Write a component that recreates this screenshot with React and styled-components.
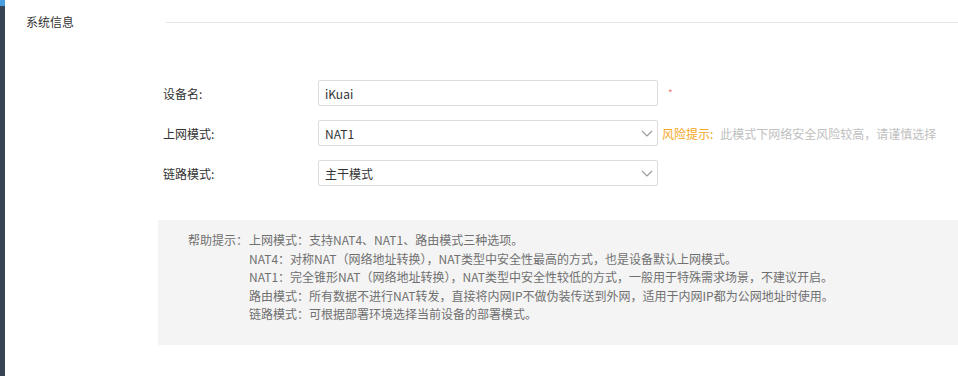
import React from "react";
import styled, { createGlobalStyle } from "styled-components";

const Global = createGlobalStyle`
  html, body { margin: 0; padding: 0; background: #fff; }
  body { font-family: "Noto Sans CJK SC", "Noto Sans", sans-serif; font-size: 12px; color: #333; }
  * { box-sizing: border-box; }
`;

const Page = styled.div`
  display: flex;
  width: 958px;
  height: 376px;
  overflow: hidden;
`;

const Sidebar = styled.div`
  width: 5px;
  flex: none;
  background: #364456;
  border-top: 6px solid #4a9fe0;
`;

const Content = styled.div`
  flex: 1;
  display: flex;
  flex-direction: column;
`;

const Header = styled.div`
  height: 44px;
  display: flex;
  align-items: center;
`;

const Title = styled.div`
  width: 161px;
  padding-left: 21px;
  font-size: 12px;
  color: #333;
  line-height: 1;
  padding-bottom: 1px;
`;

const Rule = styled.div`
  flex: 1;
  height: 1px;
  background: #e6e6e6;
`;

const Form = styled.div`
  margin-top: 36px;
  padding-left: 158px;
  display: flex;
  flex-direction: column;
  gap: 14px;
`;

const Row = styled.div`
  display: flex;
  align-items: center;
  height: 26px;
`;

const Label = styled.div`
  width: 155px;
  color: #333;
  font-size: 12px;
`;

const Field = styled.div`
  position: relative;
  width: 340px;
  height: 26px;
  border: 1px solid #dcdcdc;
  border-radius: 2px;
  display: flex;
  align-items: center;
  padding-left: 6px;
  font-size: 12px;
  color: #333;
  background: #fff;
`;

const Chevron = styled.svg`
  position: absolute;
  right: 4px;
  top: 9px;
`;

const Required = styled.span`
  margin-left: 10px;
  color: #f47c7c;
  font-size: 10px;
  margin-top: -2px;
`;

const Risk = styled.span`
  margin-left: 4px;
  color: #f5a623;
  font-size: 12px;
`;

const RiskText = styled.span`
  margin-left: 7px;
  color: #c0c0c0;
  font-size: 12px;
`;

const Help = styled.div`
  margin-top: 34px;
  margin-left: 153px;
  height: 125px;
  background: #f4f4f4;
  padding: 11px 0 0 30px;
  display: grid;
  grid-template-columns: 61px auto;
  align-content: start;
  color: #707070;
  font-size: 12px;
  line-height: 18.5px;
`;

const HelpLabel = styled.div``;

const HelpLines = styled.div`
  display: flex;
  flex-direction: column;
`;

const Arrow = () => (
  <Chevron width="12" height="7" viewBox="0 0 12 7">
    <path d="M1 1 L6 6 L11 1" fill="none" stroke="#999" strokeWidth="1.1" />
  </Chevron>
);

export default function App() {
  return (
    <>
      <Global />
      <Page>
        <Sidebar />
        <Content>
          <Header>
            <Title>系统信息</Title>
            <Rule />
          </Header>
          <Form>
            <Row>
              <Label>设备名:</Label>
              <Field>iKuai</Field>
              <Required>*</Required>
            </Row>
            <Row>
              <Label>上网模式:</Label>
              <Field>
                NAT1
                <Arrow />
              </Field>
              <Risk>风险提示:</Risk>
              <RiskText>此模式下网络安全风险较高，请谨慎选择</RiskText>
            </Row>
            <Row>
              <Label>链路模式:</Label>
              <Field>
                主干模式
                <Arrow />
              </Field>
            </Row>
          </Form>
          <Help>
            <HelpLabel>帮助提示：</HelpLabel>
            <HelpLines>
              <div>上网模式：支持NAT4、NAT1、路由模式三种选项。</div>
              <div>NAT4：对称NAT（网络地址转换），NAT类型中安全性最高的方式，也是设备默认上网模式。</div>
              <div>NAT1：完全锥形NAT（网络地址转换），NAT类型中安全性较低的方式，一般用于特殊需求场景，不建议开启。</div>
              <div>路由模式：所有数据不进行NAT转发，直接将内网IP不做伪装传送到外网，适用于内网IP都为公网地址时使用。</div>
              <div>链路模式：可根据部署环境选择当前设备的部署模式。</div>
            </HelpLines>
          </Help>
        </Content>
      </Page>
    </>
  );
}
